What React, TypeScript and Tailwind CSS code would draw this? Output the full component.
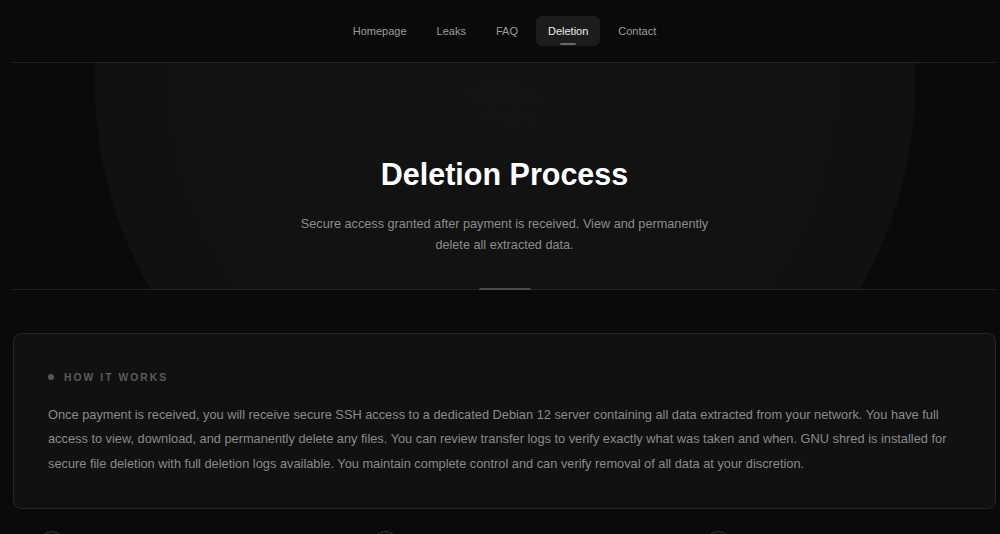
import React from "react";

const navItems = ["Homepage", "Leaks", "FAQ", "Deletion", "Contact"];

function Header() {
  return (
    <header className="ml-[13px] mr-[4px] h-[63px] border-b border-[#222222] flex items-center justify-center">
      <nav className="flex items-center gap-[6px]">
        {navItems.map((item) => {
          const active = item === "Deletion";
          return (
            <a
              key={item}
              className={`relative h-[30px] px-3 flex items-center rounded-md text-[11px] ${
                active ? "bg-[#1c1c1c] text-[#ececec]" : "text-[#9c9c9c]"
              }`}
            >
              {item}
              {active && (
                <span className="absolute bottom-[1px] left-1/2 -translate-x-1/2 w-[16px] h-[2px] rounded bg-[#6a6a6a]" />
              )}
            </a>
          );
        })}
      </nav>
    </header>
  );
}

function Hero() {
  return (
    <section className="relative overflow-hidden ml-[13px] mr-[4px]">
      {/* soft glow behind the title */}
      <div className="pointer-events-none absolute left-1/2 -translate-x-1/2 -top-[390px] w-[820px] h-[820px] rounded-full bg-[radial-gradient(circle_at_50%_50%,#131313_0%,#111111_60%,#0f0f0f_100%)]" />
      <div className="pointer-events-none absolute left-1/2 -translate-x-1/2 top-[18px] w-[120px] h-[50px] rounded-full bg-[#141414] blur-xl" />
      <div className="relative flex flex-col items-center pt-[95px] pb-[32px]">
        <h1 className="text-[30.5px] leading-[1.1] font-bold text-white">
          Deletion Process
        </h1>
        <p className="mt-[22px] max-w-[430px] text-center text-[12.7px] leading-[21.5px] text-[#8c8c8c]">
          Secure access granted after payment is received. View and permanently
          delete all extracted data.
        </p>
      </div>
      <div className="relative h-px bg-[#222222]">
        <div className="absolute left-1/2 -translate-x-1/2 -top-[1px] w-[51px] h-[2px] bg-[#4c4c4c]" />
      </div>
    </section>
  );
}

function HowItWorks() {
  return (
    <section className="ml-[13px] mr-[4px] mt-[43px] rounded-lg border border-[#262626] bg-[#111111] px-[34px] pt-[36px] pb-[32px]">
      <div className="flex items-center gap-[10px]">
        <span className="w-[6px] h-[6px] rounded-full bg-[#575757]" />
        <span className="text-[10.3px] font-bold tracking-[0.2em] text-[#5c5c5c]">
          HOW IT WORKS
        </span>
      </div>
      <p className="mt-[18px] text-[12.8px] leading-[24.3px] text-[#8a8a8a]">
        Once payment is received, you will receive secure SSH access to a
        dedicated Debian 12 server containing all data extracted from your
        network. You have full access to view, download, and permanently delete
        any files. You can review transfer logs to verify exactly what was taken
        and when. GNU shred is installed for secure file deletion with full
        deletion logs available. You maintain complete control and can verify
        removal of all data at your discretion.
      </p>
    </section>
  );
}

function Steps() {
  return (
    <section className="ml-[13px] mr-[4px] mt-[22px] grid grid-cols-3 gap-4">
      {[1, 2, 3].map((n) => (
        <div key={n} className="px-[25px]">
          <div className="w-[28px] h-[28px] rounded-full border border-[#333333] bg-[#0e0e0e]" />
        </div>
      ))}
    </section>
  );
}

export default function App() {
  return (
    <div
      className="min-h-screen bg-[#0a0a0a] pb-10"
      style={{ fontFamily: '"Liberation Sans", Arial, sans-serif' }}
    >
      <Header />
      <Hero />
      <HowItWorks />
      <Steps />
    </div>
  );
}
